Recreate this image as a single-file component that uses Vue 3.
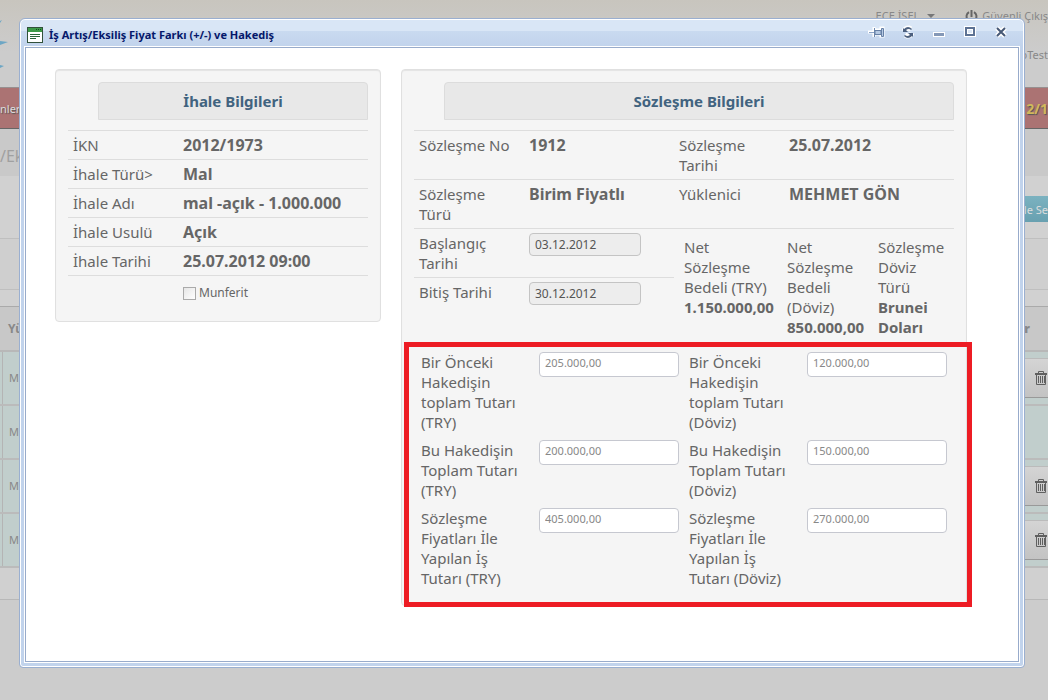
<script setup>
import { reactive, ref } from 'vue'

const tender = [
  { label: 'İKN', value: '2012/1973' },
  { label: 'İhale Türü>', value: 'Mal' },
  { label: 'İhale Adı', value: 'mal -açık - 1.000.000' },
  { label: 'İhale Usulü', value: 'Açık' },
  { label: 'İhale Tarihi', value: '25.07.2012 09:00' },
]

const single = ref(false)
const startDate = ref('03.12.2012')
const endDate = ref('30.12.2012')

const amounts = reactive([
  { id: 'prev-try', label: 'Bir Önceki Hakedişin toplam Tutarı (TRY)', value: '205.000,00' },
  { id: 'prev-fx', label: 'Bir Önceki Hakedişin toplam Tutarı (Döviz)', value: '120.000,00' },
  { id: 'this-try', label: 'Bu Hakedişin Toplam Tutarı (TRY)', value: '200.000,00' },
  { id: 'this-fx', label: 'Bu Hakedişin Toplam Tutarı (Döviz)', value: '150.000,00' },
  { id: 'work-try', label: 'Sözleşme Fiyatları İle Yapılan İş Tutarı (TRY)', value: '405.000,00' },
  { id: 'work-fx', label: 'Sözleşme Fiyatları İle Yapılan İş Tutarı (Döviz)', value: '270.000,00' },
])

const rows = [true, false, true, true]
</script>

<template>
  <div class="page">
    <div class="backdrop">
      <header class="top">
        <svg class="logo" width="9" height="60" viewBox="0 0 9 60">
          <path d="M0 6L2 5L0 8Z M0 26L8 27L0 30Z M0 50L4 51L0 53Z" fill="#6da6c4" />
        </svg>
        <div class="account">
          <div class="session">
            <span class="user">ECE İSEL <i class="caret"></i></span>
            <a href="#" class="logout">
              <svg width="13" height="13" viewBox="0 0 13 13" fill="none" stroke="#666" stroke-width="2">
                <path d="M4 2.2A5 5 0 1 0 9 2.2M6.5 0V7" />
              </svg>
              Güvenli Çıkış
            </a>
          </div>
          <span class="firm">oTest</span>
        </div>
      </header>
      <nav class="menu"><span>nler</span><b>2/1</b></nav>
      <div class="heading">/Ek</div>
      <div class="tools"><button type="button" class="select">le Se</button></div>
      <div class="filters"></div>
      <div class="spacer"></div>
      <div class="grid-head"><span>Yü</span><b>r</b></div>
      <div v-for="(deletable, i) in rows" :key="i" class="grid-row">
        <span class="cell">MEH</span>
        <button v-if="deletable" type="button" class="trash" aria-label="Sil">
          <svg width="12" height="14" viewBox="0 0 12 14" fill="none" stroke="#606060">
            <path d="M3.5 2V.5H8.5V2M1.500 4V13.500H10.500V4M3.500 5V12M5.500 5V12M7.500 5V12M9.500 5V12" />
            <path d="M0 3H12" stroke-width="2" />
          </svg>
        </button>
      </div>
      <div class="grid-foot"></div>
    </div>

    <section class="window" role="dialog" aria-labelledby="window-title">
      <header class="titlebar">
        <svg width="16" height="16" viewBox="0 0 16 16">
          <rect x=".5" y=".5" width="15" height="15" fill="#fff" stroke="#31513a" />
          <rect x="1" y="1" width="14" height="4" fill="#3c9a48" />
          <path d="M9 2.500H10M11 2.500H12M13 2.500H14" stroke="#124d1d" />
          <path d="M3 7.500H13M3 9.500H13M3 11.500H9" stroke="#28653a" />
        </svg>
        <h1 id="window-title">İş Artış/Eksiliş Fiyat Farkı (+/-) ve Hakediş</h1>
        <div class="controls">
          <button type="button" aria-label="Sabitle">
            <svg width="18" height="14" viewBox="0 0 18 14">
              <path d="M0 7H6M6 2V12M7 5H13V9H7ZM13 3H15V11H13Z" fill="none" stroke="#fff" stroke-width="3" />
              <path d="M1 7.500H6" stroke="#8ba3c6" />
              <path d="M6.500 3V12" stroke="#6e87ac" />
              <path d="M7 5.500H13V9.500H7ZM13.500 3.500H15.500V11.500H13.500Z" fill="#b5c9e3" stroke="#6680a6" />
            </svg>
          </button>
          <button type="button" aria-label="Yenile">
            <svg width="14" height="14" viewBox="0 0 14 14" fill="none">
              <path d="M3 6Q4 3 8 3L10 4M11 8Q10 11 6 11L4 10" stroke="#fff" stroke-width="5" />
              <path d="M2 3V7H7L5 5Q8 3 10 5L11 4Q7 0 3 4ZM12 12V8H7L9 10Q6 12 4 10L3 11Q7 15 11 11Z" fill="#4c607f" />
            </svg>
          </button>
          <button type="button" aria-label="Küçült">
            <svg width="14" height="14" viewBox="0 0 14 14">
              <rect x="1" y="7" width="12" height="5" fill="#fff" /><rect x="2" y="8" width="10" height="3" fill="#8498b7" />
            </svg>
          </button>
          <button type="button" aria-label="Büyüt">
            <svg width="14" height="14" viewBox="0 0 14 14">
              <rect x="1" y="1" width="12" height="11" fill="#fff" /><rect x="3" y="3" width="8" height="7" fill="#dce7f5" stroke="#5d7293" stroke-width="2" /><rect x="4.500" y="4.500" width="5" height="4" fill="none" stroke="#fff" />
            </svg>
          </button>
          <button type="button" aria-label="Kapat">
            <svg width="14" height="14" viewBox="0 0 14 14" fill="none">
              <path d="M3 3L11 11M11 3L3 11" stroke="#fff" stroke-width="5" />
              <path d="M3 3L11 11M11 3L3 11" stroke="#465875" stroke-width="2" />
            </svg>
          </button>
        </div>
      </header>

      <div class="body">
        <section class="panel">
          <h2>İhale Bilgileri</h2>
          <table class="tender">
            <tbody>
              <tr v-for="row in tender" :key="row.label">
                <th scope="row">{{ row.label }}</th>
                <td>{{ row.value }}</td>
              </tr>
            </tbody>
          </table>
          <label class="check"><input v-model="single" type="checkbox" />Munferit</label>
        </section>

        <section class="panel">
          <h2>Sözleşme Bilgileri</h2>
          <table class="contract">
            <colgroup><col class="c1" /><col class="c2" /><col class="c1" /><col class="c3" /></colgroup>
            <tbody>
              <tr>
                <th scope="row">Sözleşme No</th><td>1912</td>
                <th scope="row">Sözleşme Tarihi</th><td>25.07.2012</td>
              </tr>
              <tr>
                <th scope="row">Sözleşme<br />Türü</th><td>Birim Fiyatlı</td>
                <th scope="row">Yüklenici</th><td>MEHMET GÖN</td>
              </tr>
              <tr class="start">
                <th scope="row"><label for="start">Başlangıç Tarihi</label></th>
                <td><input id="start" v-model="startDate" class="date" type="text" readonly /></td>
                <td class="totals-cell" colspan="2" rowspan="2">
                  <div class="totals">
                    <div>Net Sözleşme Bedeli (TRY) <b>1.150.000,00</b></div>
                    <div>Net Sözleşme Bedeli (Döviz) <b>850.000,00</b></div>
                    <div>Sözleşme Döviz<br />Türü <b>Brunei Doları</b></div>
                  </div>
                </td>
              </tr>
              <tr class="end">
                <th scope="row"><label for="end">Bitiş Tarihi</label></th>
                <td><input id="end" v-model="endDate" class="date" type="text" readonly /></td>
              </tr>
            </tbody>
          </table>
          <div class="amounts">
            <div v-for="item in amounts" :key="item.id" class="amount">
              <label :for="item.id">{{ item.label }}</label>
              <input :id="item.id" v-model="item.value" type="text" />
            </div>
          </div>
        </section>
      </div>
    </section>
  </div>
</template>

<style>
body { margin: 0; background: #ccc; }
</style>

<style scoped>
* { box-sizing: border-box; }
.page { position: relative; min-height: 100vh; font-family: "Noto Sans", "Open Sans", sans-serif; color: #666; }
button { font: inherit; }

.backdrop { overflow: hidden; white-space: nowrap; font-size: 12px; color: #888; }
.top { height: 87px; display: flex; justify-content: space-between; background: linear-gradient(#c8c5be, #ccc 60%); }
.logo { margin-top: 15px; }
.account { display: flex; flex-direction: column; align-items: flex-end; gap: 22px; padding-top: 8px; }
.session { display: flex; gap: 30px; line-height: 16px; font-size: 11px; }
.user { display: flex; align-items: center; gap: 8px; }
.caret { border: 4px solid transparent; border-top-color: #777; border-bottom: 0; }
.logout { display: flex; align-items: center; gap: 4px; color: #888; text-decoration: none; }
.firm { line-height: 18px; font-size: 11px; }
.menu { height: 42px; display: flex; justify-content: space-between; align-items: center; background: #ab7373; border-top: 1px solid #969090; border-bottom: 1px solid #666; color: #ddd; text-shadow: 1px 1px 1px #555; font-size: 11px; }
.menu b { font-size: 14px; color: #d0b85c; }
.heading { height: 47px; line-height: 54px; font-size: 16px; color: #a0a0a0; background: #c9c9c9; }
.tools { height: 63px; display: flex; justify-content: flex-end; align-items: flex-start; padding-top: 20px; background: #d1d1d1; border-bottom: 1px solid #bfbfbf; }
.select { height: 26px; padding: 0 0 0 2px; border: 0; color: #ddd; background: linear-gradient(#7bb2c0, #68a0b0); font-size: 11px; }
.filters { height: 51px; background: #cfcfcf; border-bottom: 1px solid #bfbfbf; }
.spacer { height: 16px; background: #d1d1d1; }
.grid-head { height: 46px; display: flex; justify-content: space-between; align-items: center; padding: 0 18px 0 8px; font-weight: bold; background: #c8c8c8; border-top: 1px solid #aaa; border-bottom: 2px solid #b8b8b8; }
.grid-row { height: 54px; display: flex; justify-content: space-between; align-items: center; background: #c1cecc; border-bottom: 2px solid #bbb; }
.cell { align-self: stretch; margin-left: 2px; padding-left: 6px; border-left: 1px solid #b4b4b4; line-height: 51px; font-size: 11px; }
.trash { width: 24px; height: 40px; padding: 0 0 0 11px; border: 0; border-top: 1px solid #bbb; border-bottom: 1px solid #999; background: linear-gradient(#d4d4d4, #c3c3c3); }
.trash svg { display: block; }
.grid-foot { height: 32px; background: #d0d0d0; border-bottom: 1px solid #b8b8b8; }

.window { position: absolute; inset: 18px 23px 32px 19px; display: flex; flex-direction: column; padding: 1px 5px 5px; border: 1px solid #9aafd0; border-radius: 6px 6px 4px 4px; background: linear-gradient(#d9e6f6 0 12px, #c9daf0 12px, #c1d3ec 28px); box-shadow: inset 0 0 0 1px #fff; }
.titlebar { height: 26px; display: flex; align-items: center; padding: 4px 5px 0 2px; }
.titlebar h1 { margin: 0 0 0 6px; font: bold 11px/16px "Noto Sans", sans-serif; color: #04176a; }
.controls { display: flex; gap: 16px; margin: -6px 6px 0 auto; }
.controls button { width: 15px; height: 14px; display: flex; justify-content: center; padding: 0; border: 0; background: none; }
.controls svg { flex: none; }
.body { flex: 1; display: grid; grid-template-columns: 326fr 566fr; align-items: start; gap: 20px; margin-top: 1px; padding: 21px 51px 20px 29px; background: #fff; border: 1px solid #98abcb; outline: 1px solid #fff; }

.panel { min-width: 0; padding: 12px; border: 1px solid #e0e0e0; border-radius: 4px; background: #f5f5f5; box-shadow: inset 0 1px 1px #e4e4e4; }
.panel h2 { margin: 0 0 10px 30px; height: 38px; border: 1px solid #dcdcdc; border-radius: 4px 4px 0 0; background: #e8e8e8; color: #41637f; font: bold 15px/36px "Noto Sans", sans-serif; text-align: center; }
table { width: 100%; table-layout: fixed; border-collapse: separate; border-spacing: 0; font-size: 15px; line-height: 20px; }
th, td { padding: 4px 5px; border-top: 1px solid #ddd; text-align: left; vertical-align: top; }
th { width: 110px; font-weight: normal; }
td { font-size: 16px; font-weight: bold; }
.tender tr:last-child > * { border-bottom: 1px solid #ddd; }
.check { display: flex; align-items: center; gap: 3px; margin: 8px 0 7px 115px; font-size: 12px; line-height: 18px; }
.check input { appearance: none; width: 13px; height: 13px; margin: 0; border: 1px solid #aaa; background: linear-gradient(135deg, #e6e6e6, #fff); }
.c1 { width: 110px; }
.c2 { width: 150px; }
.start { height: 49px; }
.end { height: 61px; }
.date { display: block; width: 112px; height: 23px; padding: 0 5px; border: 1px solid #c4c4c4; border-radius: 4px; background: #ededed; color: #555; font: 12px "Noto Sans", sans-serif; }
.totals-cell { padding: 8px 0 0 10px; font-size: 15px; font-weight: normal; }
.totals { display: grid; grid-template-columns: 93px 81px 1fr; gap: 10px; }
.totals b { display: block; }
.amounts { position: relative; display: grid; grid-template-columns: 1fr 1fr; gap: 8px 10px; margin-top: 14px; padding: 0 7px 5px; font-size: 15px; line-height: 20px; }
.amounts::after { content: ""; position: absolute; inset: -10px -18px -14px -10px; border: 5px solid #ed1c24; pointer-events: none; }
.amount { display: flex; align-items: flex-start; justify-content: space-between; gap: 10px; }
.amount label { width: 108px; }
.amount input { flex: none; width: 140px; height: 25px; padding: 0 5px 4px; border: 1px solid #c6c8d0; border-radius: 4px; background: #fff; color: #888; font: 11px "Noto Sans", sans-serif; }
</style>
